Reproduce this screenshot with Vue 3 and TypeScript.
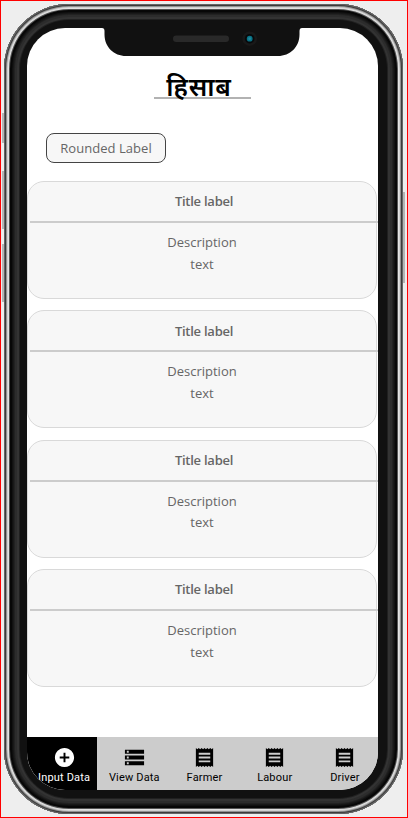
<script setup lang="ts">
interface Card { title: string; lines: string[] }
interface Tab { label: string; icon: 'add' | 'storage' | 'receipt' }

const cards: Card[] = Array.from({ length: 4 }, () => ({
  title: 'Title label',
  lines: ['Description', 'text'],
}))

const tabs: Tab[] = [
  { label: 'Input Data', icon: 'add' },
  { label: 'View Data', icon: 'storage' },
  { label: 'Farmer', icon: 'receipt' },
  { label: 'Labour', icon: 'receipt' },
  { label: 'Driver', icon: 'receipt' },
]

const paths: Record<Tab['icon'], string> = {
  add: 'M12 2C6.48 2 2 6.48 2 12s4.48 10 10 10 10-4.48 10-10S17.52 2 12 2zm5 11h-4v4h-2v-4H7v-2h4V7h2v4h4v2z',
  storage: 'M2 20h20v-4H2v4zm2-3h2v2H4v-2zM2 4v4h20V4H2zm4 3H4V5h2v2zm-4 7h20v-4H2v4zm2-3h2v2H4v-2z',
  receipt: 'M18 17H6v-2h12v2zm0-4H6v-2h12v2zm0-4H6V7h12v2zM3 22l1.500-1.500L6 22l1.500-1.500L9 22l1.500-1.500L12 22l1.500-1.500L15 22l1.500-1.500L18 22l1.500-1.500L21 22V2l-1.500 1.500L18 2l-1.500 1.500L15 2l-1.500 1.500L12 2l-1.500 1.500L9 2 7.500 3.500 6 2 4.500 3.500 3 2v20z',
}
</script>

<template>
  <div class="stage">
    <i class="key mute"></i>
    <i class="key up"></i>
    <i class="key down"></i>
    <i class="key power"></i>
    <div class="phone">
      <div class="screen">
        <header class="head">
          <h1>हिसाब</h1>
        </header>
        <div class="pill">Rounded Label</div>
        <main class="cards">
          <section v-for="(card, i) in cards" :key="i" class="card">
            <h2>{{ card.title }}</h2>
            <div class="rule"></div>
            <p v-for="line in card.lines" :key="line">{{ line }}</p>
          </section>
        </main>
        <nav class="tabs">
          <div v-for="(tab, i) in tabs" :key="tab.label" class="tab" :class="{ active: i === 0 }">
            <svg viewBox="0 0 24 24"><path :d="paths[tab.icon]" /></svg>
            <span>{{ tab.label }}</span>
          </div>
        </nav>
      </div>
      <svg class="notch" viewBox="0 0 200 30">
        <path d="M0 0H200V1Q197.500 1 197.500 4V7.500C197.500 20 188 29 176 29H24C12 29 2.500 20 2.500 7.500V4Q2.500 1 0 1Z" fill="#111" />
        <rect x="71" y="8.500" width="56" height="6.500" rx="3.250" fill="#292929" />
        <circle cx="147.700" cy="11.700" r="7.300" fill="#191919" />
        <circle cx="147.700" cy="11.700" r="4.800" fill="#08090b" />
        <circle cx="147.700" cy="11.700" r="2.900" fill="#087487" />
        <circle cx="147.700" cy="11.700" r="1.400" fill="#23879b" />
      </svg>
    </div>
  </div>
</template>

<style>
body { margin: 0; background: #eee; }
</style>

<style scoped>
.stage {
  position: relative;
  box-sizing: border-box;
  width: 408px;
  height: 818px;
  padding: 3px 0 0 3px;
  border: 1px solid #f00;
  background: #eee;
  overflow: hidden;
  font-family: "Open Sans", "Noto Sans", sans-serif;
}
.phone {
  position: relative;
  box-sizing: border-box;
  width: 399px;
  height: 810px;
  padding: 24px 24px 24px 23px;
  border-radius: 65px;
  background: #111;
  box-shadow:
    inset 0 0 0 1px #666,
    inset 0 0 0 2px #3c3c3c,
    inset 0 0 0 3px #929292,
    inset 0 0 0 4px #d0d0d0,
    inset 0 0 0 5px #e2e2e2,
    inset 0 0 0 6px #555,
    inset 0 0 0 8px #070707,
    inset 0 0 0 9px #111,
    inset 0 0 0 10px #191919,
    inset 0 0 0 11px #222,
    inset 0 0 0 13px #2c2c2c,
    inset 0 0 0 15px #333,
    inset 0 0 0 16px #202020;
}
.screen {
  display: flex;
  flex-direction: column;
  box-sizing: border-box;
  width: 351px;
  height: 762px;
  border-radius: 38px;
  background: #fff;
  overflow: hidden;
}
.notch { position: absolute; left: 98px; top: 23px; width: 200px; height: 30px; }
.head {
  align-self: center;
  width: 97px;
  height: 71px;
  box-sizing: border-box;
  border-bottom: 2px solid #b2b2b2;
  display: flex;
  justify-content: center;
  align-items: flex-end;
}
h1 {
  margin: 0 7px -7px 0;
  font: 600 26px/36px "Noto Sans", "Noto Sans Devanagari", sans-serif;
  letter-spacing: 0.8px;
  color: #000;
  white-space: nowrap;
}
.pill {
  box-sizing: border-box;
  width: 120px;
  height: 30px;
  margin: 34px 0 18px 19px;
  border: 1px solid #444;
  border-radius: 8px;
  background: #f7f7f7;
  color: #666;
  font-size: 13px;
  letter-spacing: 0.05px;
  line-height: 29px;
  text-align: center;
}
.cards { display: flex; flex-direction: column; gap: 11.4px; }
.card {
  box-sizing: border-box;
  width: 350px;
  height: 118px;
  border: 1px solid #d9d9d9;
  border-radius: 17px;
  background: #f7f7f7;
  color: #666;
  font-size: 13px;
  text-align: center;
}
.card h2 { margin: 0; padding: 9.3px 0 0 4px; font-size: 13px; font-weight: 600; line-height: 21px; letter-spacing: -0.25px; }
.rule { height: 2px; margin: 8.7px -2px 9.1px 2px; background: #ccc; }
.card p { margin: 0; line-height: 21.500px; }
.tabs { display: flex; height: 53px; margin-top: auto; flex: none; background: #ccc; }
.tab {
  flex: 1;
  display: flex;
  flex-direction: column;
  align-items: center;
  box-sizing: border-box;
  padding: 9px 0 0 4px;
  color: #000;
  font: 11px/17px Roboto, sans-serif;
  letter-spacing: 0.170px;
  white-space: nowrap;
}
.tab svg { width: 23px; height: 23px; fill: currentColor; }
.tab.active { background: #000; color: #fff; }
.key { position: absolute; width: 3px; background: #b5b5b5; }
.mute { left: 1px; top: 112px; height: 30px; }
.up { left: 1px; top: 170px; height: 58px; }
.down { left: 1px; top: 243px; height: 58px; }
.power { left: 401px; top: 191px; height: 91px; }
</style>
